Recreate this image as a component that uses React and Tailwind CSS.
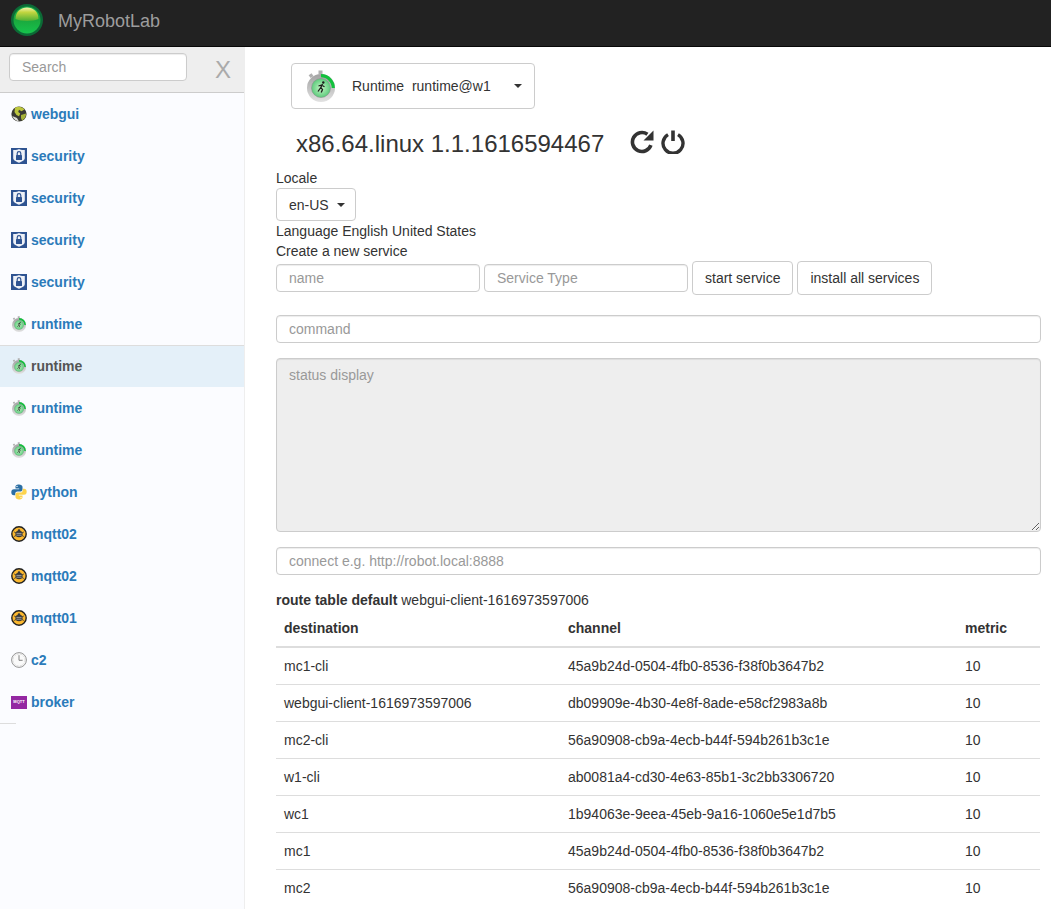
import React from "react";

const Caret = ({ className = "" }) => (
  <span className={`inline-block w-0 h-0 border-x-4 border-x-transparent border-t-4 border-t-[#333] ${className}`} />
);

const Logo = () => (
  <svg width="32" height="32" viewBox="0 0 32 32" className="mb-[2px]">
    <defs>
      <linearGradient id="lg" x1="0" y1="0" x2="0" y2="1">
        <stop offset="0" stopColor="#12b048" />
        <stop offset="0.5" stopColor="#1aa83e" />
        <stop offset="1" stopColor="#16c44c" />
      </linearGradient>
      <linearGradient id="dome" x1="0" y1="0" x2="0" y2="1">
        <stop offset="0" stopColor="#f2f2b0" />
        <stop offset="0.35" stopColor="#c3d640" />
        <stop offset="1" stopColor="#4fb034" />
      </linearGradient>
    </defs>
    <circle cx="16" cy="16" r="16" fill="#0c6a36" />
    <circle cx="16" cy="16" r="13.5" fill="url(#lg)" />
    <path d="M4.5 15 C4.5 7.5 10 3.5 16 3.5 C22 3.5 27.5 7.5 27.5 15 C23 17.5 9 17.5 4.5 15 Z" fill="url(#dome)" />
  </svg>
);

const Stopwatch = ({ size = 16, idp = "a" }) => (
  <svg width={size} height={size} viewBox="0 0 32 32">
    <defs>
      <radialGradient id={`sw${idp}`}>
        <stop offset="0" stopColor="#c4f5c4" />
        <stop offset="1" stopColor="#5ccb7c" />
      </radialGradient>
      <linearGradient id={`rg${idp}`} x1="0" y1="0" x2="0" y2="1">
        <stop offset="0" stopColor="#a2a2a2" />
        <stop offset="1" stopColor="#e2e2e2" />
      </linearGradient>
    </defs>
    <rect x="4.5" y="4" width="3.5" height="3.5" fill="#b0b0b0" transform="rotate(-35 6 6)" />
    <rect x="13.5" y="0.5" width="4" height="3.5" fill="#b0b0b0" />
    <circle cx="16" cy="18" r="14" fill={`url(#rg${idp})`} />
    <circle cx="16" cy="18" r="9.5" fill={`url(#sw${idp})`} stroke="#888" strokeWidth="0.5" />
    <path d="M16 5.7 A12.3 12.3 0 0 1 28.3 18" fill="none" stroke="#12c13d" strokeWidth="3.2" />
    <path d="M17.5 14 L15.8 17.5 L17.5 19.5 L16.2 22.5 M15.8 17.5 L13 21.5 M16.5 15 L19.5 16.8 M16.5 15 L13.5 16" stroke="#1b1b1b" strokeWidth="1.3" fill="none" />
    <circle cx="18.3" cy="12.5" r="1.2" fill="#1b1b1b" />
  </svg>
);

const Globe = () => (
  <svg width="16" height="16" viewBox="0 0 16 16">
    <circle cx="8" cy="8" r="7.6" fill="#3a3a34" />
    <path d="M4 1.8 C7 .2 11 .6 13.5 3.5 L10.5 5.2 L8 3.8 L7.2 6 L9.2 7.5 L8 10.2 L5.5 9 L3.5 6 Z" fill="#bcc63e" />
    <path d="M10 9 L15 7.5 C15.2 10 13.8 13 11 14.5 L10 12 Z" fill="#a6b238" />
    <path d="M1.2 10 C2.5 13 5 15 8 15.4 L6 12 Z" fill="#dcdcd8" />
  </svg>
);

const Shield = () => (
  <svg width="16" height="16" viewBox="0 0 16 16">
    <rect width="16" height="16" fill="#2e5391" />
    <path d="M2.2 2 C5 2.2 6.5 1.8 8 1 C9.5 1.8 11 2.2 13.8 2 L13.8 10 C13.8 12.5 10 14 8 14.8 C6 14 2.2 12.5 2.2 10 Z" fill="#eef1f7" />
    <rect x="5" y="7" width="6" height="5" rx="0.5" fill="#2e5391" />
    <path d="M6.2 7 V5.5 A1.8 1.8 0 0 1 9.8 5.5 V7" fill="none" stroke="#2e5391" strokeWidth="1.2" />
  </svg>
);

const Python = () => (
  <svg width="16" height="16" viewBox="0 0 16 16">
    <path d="M8 0.5 C5 0.5 4.5 1.7 4.5 3 V4.5 H8.2 V5.2 H3 C1.2 5.2 0.3 6.5 0.3 8.2 C0.3 10 1.2 11.2 3 11.2 H4.3 V9.5 C4.3 8.3 5.3 7.4 6.5 7.4 H9.7 C10.8 7.4 11.5 6.6 11.5 5.5 V3 C11.5 1.5 10 0.5 8 0.5 Z" fill="#2b6ea3" />
    <path d="M8 15.5 C11 15.5 11.5 14.3 11.5 13 V11.5 H7.8 V10.8 H13 C14.8 10.8 15.7 9.5 15.7 7.8 C15.7 6 14.8 4.8 13 4.8 H11.7 V6.5 C11.7 7.7 10.7 8.6 9.5 8.6 H6.3 C5.2 8.6 4.5 9.4 4.5 10.5 V13 C4.5 14.5 6 15.5 8 15.5 Z" fill="#fcd34d" />
    <circle cx="6" cy="2.4" r="0.7" fill="#fff" />
    <circle cx="10" cy="13.6" r="0.7" fill="#fff" />
  </svg>
);

const Bee = () => (
  <svg width="16" height="16" viewBox="0 0 16 16">
    <circle cx="8" cy="8" r="7.2" fill="#fbb82f" stroke="#222" strokeWidth="1.4" />
    <ellipse cx="8" cy="8" rx="3.6" ry="3.2" fill="#3a3a3a" />
    <path d="M3.2 6 L5 7 M12.8 6 L11 7 M3.2 10.5 L5 9.5 M12.8 10.5 L11 9.5" stroke="#3a3a3a" strokeWidth="0.9" />
    <circle cx="8" cy="4.6" r="1.3" fill="#3a3a3a" />
    <path d="M5.4 7.4 H10.6 M5.4 9.2 H10.6" stroke="#ddd" strokeWidth="0.6" />
  </svg>
);

const Clock = () => (
  <svg width="16" height="16" viewBox="0 0 16 16">
    <circle cx="8" cy="8" r="7.4" fill="#fafafa" stroke="#8a8a8a" strokeWidth="0.9" />
    <circle cx="8" cy="8" r="6" fill="none" stroke="#bdbdbd" strokeWidth="0.9" strokeDasharray="0.6 0.9" />
    <path d="M8 3.2 V8.3 H11.6" fill="none" stroke="#666" strokeWidth="0.8" />
  </svg>
);

const Mqtt = () => (
  <span className="w-4 h-[13px] bg-[#9428a2] flex items-center justify-center text-white text-[4px] font-bold leading-none tracking-normal overflow-hidden">
    MQTT
  </span>
);

const Refresh = () => (
  <svg width="24" height="24" viewBox="0 0 24 24" className="ml-[26px] mb-1" fill="none">
    <path d="M17.4 4.2 A9.5 9.5 0 1 0 20.9 15.2" stroke="#333" strokeWidth="3.6" />
    <path d="M23.5 0.5 V10.5 H13.5 Z" fill="#333" />
  </svg>
);

const Power = () => (
  <svg width="24" height="24" viewBox="0 0 24 24" className="ml-[7px] mb-1" fill="none">
    <path d="M17 4.6 A10 10 0 1 1 7 4.6" stroke="#333" strokeWidth="3.4" />
    <path d="M12 0.5 V11" stroke="#333" strokeWidth="3.6" />
  </svg>
);

const services = [
  ["webgui", <Globe />],
  ["security", <Shield />],
  ["security", <Shield />],
  ["security", <Shield />],
  ["security", <Shield />],
  ["runtime", <Stopwatch idp="r1" />],
  ["runtime", <Stopwatch idp="r2" />, true],
  ["runtime", <Stopwatch idp="r3" />],
  ["runtime", <Stopwatch idp="r4" />],
  ["python", <Python />],
  ["mqtt02", <Bee />],
  ["mqtt02", <Bee />],
  ["mqtt01", <Bee />],
  ["c2", <Clock />],
  ["broker", <Mqtt />],
];

const routes = [
  ["mc1-cli", "45a9b24d-0504-4fb0-8536-f38f0b3647b2", "10"],
  ["webgui-client-1616973597006", "db09909e-4b30-4e8f-8ade-e58cf2983a8b", "10"],
  ["mc2-cli", "56a90908-cb9a-4ecb-b44f-594b261b3c1e", "10"],
  ["w1-cli", "ab0081a4-cd30-4e63-85b1-3c2bb3306720", "10"],
  ["wc1", "1b94063e-9eea-45eb-9a16-1060e5e1d7b5", "10"],
  ["mc1", "45a9b24d-0504-4fb0-8536-f38f0b3647b2", "10"],
  ["mc2", "56a90908-cb9a-4ecb-b44f-594b261b3c1e", "10"],
];

const inputCls =
  "h-7 px-3 bg-white border border-[#ccc] rounded text-sm text-[#555] placeholder:text-[#999] outline-none shadow-[inset_0_1px_1px_rgba(0,0,0,0.075)]";
const btnCls = "h-[34px] px-3 bg-white border border-[#ccc] rounded text-sm text-[#333]";

export default function App() {
  return (
    <div className="h-screen overflow-hidden bg-white text-sm leading-5 text-[#333] font-['Liberation_Sans',Arial,sans-serif]">
      <header className="h-[47px] bg-[#222] border-b border-[#080808] flex items-center pl-[11px] pb-1">
        <Logo />
        <span className="ml-[15px] text-lg text-[#9d9d9d]">MyRobotLab</span>
      </header>
      <div className="flex h-[862px]">
        <aside className="w-[245px] shrink-0 bg-[#fbfcff] border-r border-[#eee]">
          <div className="h-[46px] bg-[#eee] border-b border-[#ccc] flex items-start pl-[9px] pt-[6px]">
            <input className={`${inputCls} w-[178px]`} placeholder="Search" />
            <span className="ml-[28px] mt-[3px] text-2xl leading-[28px] text-[#aaa]">X</span>
          </div>
          <ul>
            {services.map(([name, icon, active], i) => (
              <li
                key={i}
                className={`h-[42px] flex items-center pl-[11px] gap-1 font-bold ${
                  active ? "bg-[#e4f0f9] text-[#555] shadow-[inset_0_1px_0_#ddd]" : "text-[#2b7bba]"
                }`}
              >
                <span className="w-4 h-4 flex items-center justify-center shrink-0">{icon}</span>
                {name}
              </li>
            ))}
          </ul>
          <div className="w-4 border-t border-[#ddd]" />
        </aside>
        <main className="flex-1 min-w-0 pl-[31px] pr-[10px] pt-4">
          <button className="ml-[15px] w-[244px] h-[46px] bg-white border border-[#ccc] rounded flex items-center pl-[13px] text-sm text-[#333]">
            <Stopwatch size={32} idp="big" />
            <span className="ml-[15px] whitespace-pre">Runtime  runtime@w1</span>
            <Caret className="ml-[23px]" />
          </button>
          <div className="flex items-center h-[59px] pt-[11px] ml-5">
            <h3 className="text-2xl leading-[26px] font-normal">x86.64.linux 1.1.1616594467</h3>
            <Refresh />
            <Power />
          </div>
          <div>Locale</div>
          <button className="w-20 h-[33px] bg-white border border-[#ccc] rounded flex items-center pl-3 gap-2 text-sm">
            en-US
            <Caret />
          </button>
          <div>Language English United States</div>
          <div>Create a new service</div>
          <div className="flex items-center gap-1 h-[34px]">
            <input className={`${inputCls} w-[204px]`} placeholder="name" />
            <input className={`${inputCls} w-[204px]`} placeholder="Service Type" />
            <button className={btnCls}>start service</button>
            <button className={btnCls}>install all services</button>
          </div>
          <input className={`${inputCls} w-full mt-5 block`} placeholder="command" />
          <textarea
            disabled
            className="block w-full h-[174px] mt-[15px] px-3 py-[6px] bg-[#eee] border border-[#ccc] rounded text-sm placeholder:text-[#999] outline-none shadow-[inset_0_1px_1px_rgba(0,0,0,0.075)]"
            placeholder="status display"
          />
          <input className={`${inputCls} w-full mt-[15px] block`} placeholder="connect e.g. http://robot.local:8888" />
          <div className="mt-[15px]">
            <b>route table default</b> webgui-client-1616973597006
          </div>
          <table className="w-[764px] table-fixed border-collapse">
            <colgroup>
              <col className="w-[284px]" />
              <col className="w-[397px]" />
              <col />
            </colgroup>
            <thead>
              <tr className="h-[37px] border-b-2 border-[#ddd] text-left">
                <th className="px-2 font-bold">destination</th>
                <th className="px-2 font-bold">channel</th>
                <th className="px-2 font-bold">metric</th>
              </tr>
            </thead>
            <tbody>
              {routes.map((r, i) => (
                <tr key={i} className={`h-[37px] ${i < routes.length - 1 ? "border-b border-[#ddd]" : ""}`}>
                  {r.map((c, j) => (
                    <td key={j} className="px-2">
                      {c}
                    </td>
                  ))}
                </tr>
              ))}
            </tbody>
          </table>
        </main>
      </div>
    </div>
  );
}
